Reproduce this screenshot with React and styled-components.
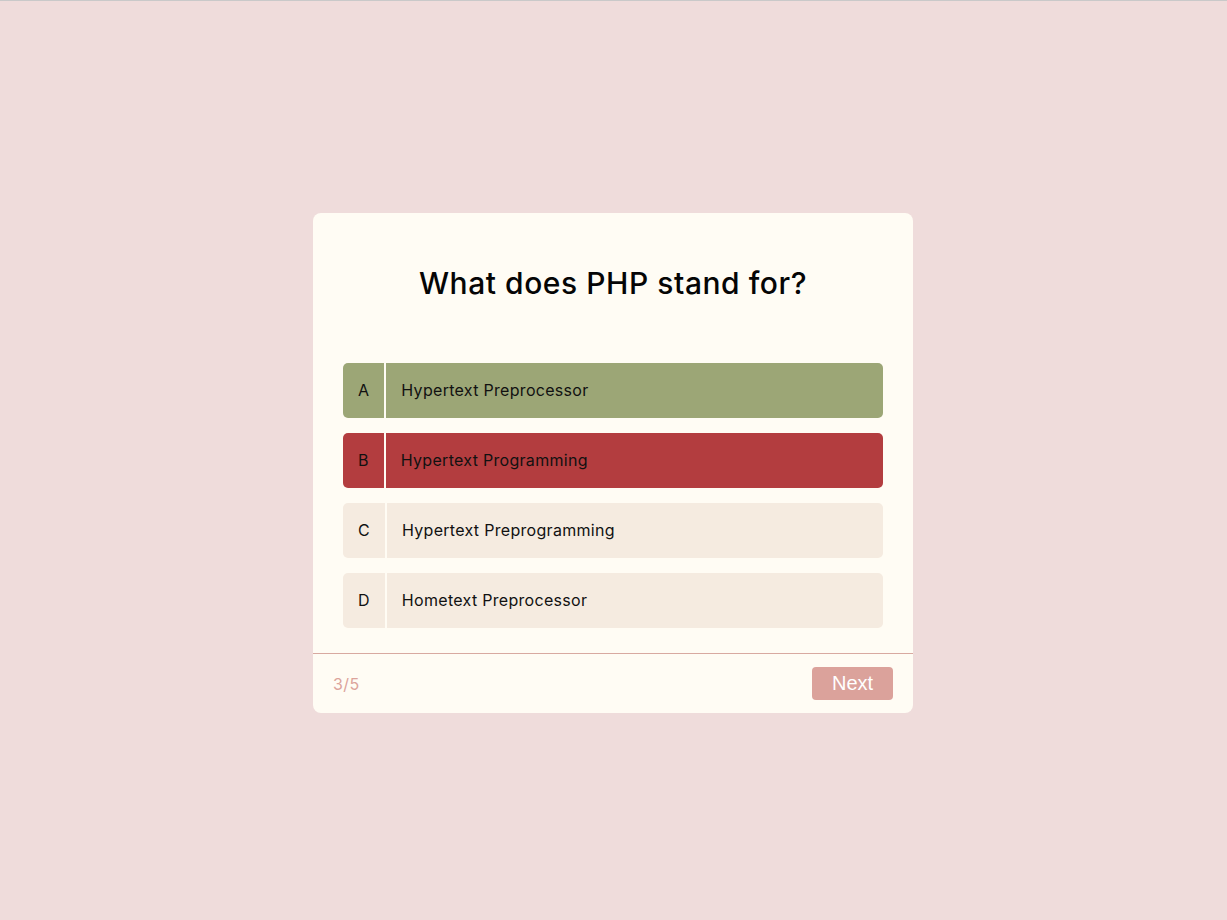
import React from "react";
import styled, { createGlobalStyle } from "styled-components";

const Global = createGlobalStyle`
  * { box-sizing: border-box; }
  html, body { margin: 0; padding: 0; }
  body {
    background: #efdcdb;
    font-family: "Inter", "Noto Sans", sans-serif;
    color: #111;
  }
`;

const Page = styled.div`
  height: 100vh;
  border-top: 1px solid #c9c9c9;
  padding: 5px 1px 0 0;
  display: flex;
  align-items: center;
  justify-content: center;
`;

const Card = styled.div`
  width: 600px;
  height: 500px;
  background: #fffcf4;
  border-radius: 8px;
  display: flex;
  flex-direction: column;
  overflow: hidden;
`;

const Body = styled.div`
  flex: 1;
  padding: 0 30px 25px;
  display: flex;
  flex-direction: column;
`;

const Title = styled.h2`
  margin: 0;
  height: 150px;
  padding-top: 50px;
  text-align: center;
  font-size: 30px;
  line-height: 40px;
  font-weight: 500;
  color: #050505;
  letter-spacing: 0.55px;
`;

const Options = styled.div`
  display: flex;
  flex-direction: column;
  gap: 15px;
`;

const Option = styled.div`
  display: flex;
  align-items: stretch;
  height: 55px;
  border-radius: 5px;
  overflow: hidden;
  background: ${(p) =>
    p.$state === "correct" ? "#9ca676" : p.$state === "wrong" ? "#b33d3f" : "#f5ebe0"};
  font-size: 16px;
  letter-spacing: 0.3px;
  color: #111;
`;

const Letter = styled.div`
  display: flex;
  align-items: center;
  justify-content: center;
  padding: 0 15px 2px;
  min-width: 41px;
  border-right: 2px solid #fffcf4;
`;

const Text = styled.div`
  display: flex;
  align-items: center;
  padding: 0 0 2px 15px;
`;

const Footer = styled.div`
  height: 60px;
  border-top: 1px solid #d8a9a0;
  display: flex;
  align-items: center;
  justify-content: space-between;
  padding: 0 20px;
`;

const Count = styled.span`
  color: #dca39b;
  font-size: 16px;
  letter-spacing: 0.4px;
`;

const NextButton = styled.button`
  width: 81px;
  height: 33px;
  border: none;
  border-radius: 4px;
  background: #dba29b;
  color: #fff;
  font-family: "Liberation Sans", Arial, sans-serif;
  font-size: 20px;
  padding: 0;
  cursor: pointer;
`;

const options = [
  { l: "A", t: "Hypertext Preprocessor", s: "correct" },
  { l: "B", t: "Hypertext Programming", s: "wrong" },
  { l: "C", t: "Hypertext Preprogramming", s: "" },
  { l: "D", t: "Hometext Preprocessor", s: "" },
];

export default function App() {
  return (
    <>
      <Global />
      <Page>
        <Card>
          <Body>
            <Title>What does PHP stand for?</Title>
            <Options>
              {options.map((o) => (
                <Option key={o.l} $state={o.s}>
                  <Letter>{o.l}</Letter>
                  <Text>{o.t}</Text>
                </Option>
              ))}
            </Options>
          </Body>
          <Footer>
            <Count>3/5</Count>
            <NextButton>Next</NextButton>
          </Footer>
        </Card>
      </Page>
    </>
  );
}
